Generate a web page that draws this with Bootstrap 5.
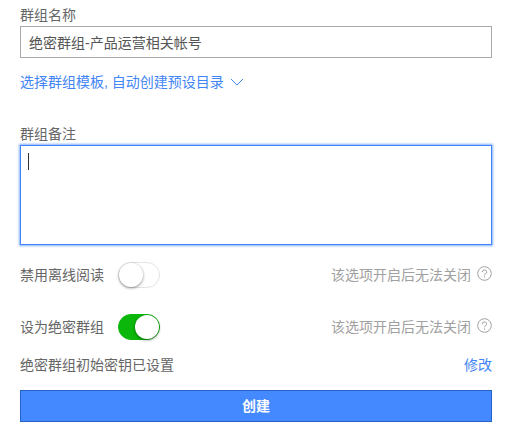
<!DOCTYPE html>
<html lang="zh-CN">
<head>
    <meta charset="UTF-8">
    <meta name="viewport" content="width=device-width, initial-scale=1.0">
    <title>创建群组</title>
    <link href="https://cdn.jsdelivr.net/npm/bootstrap@5.3.0/dist/css/bootstrap.min.css" rel="stylesheet">
    <style>
        body {
            font-family: "Liberation Sans", "Noto Sans CJK SC", sans-serif;
            font-size: 14px;
            color: #666;
            background: #fff;
        }
        .group-form {
            padding: 5px 32px 0 20px;
        }
        .field-label {
            display: block;
            height: 20px;
            line-height: 20px;
            margin-bottom: 1px;
            color: #666;
        }
        .note-label {
            margin-top: 32px;
        }
        .name-input.form-control {
            height: 32px;
            padding: 0 8px;
            font-size: 14px;
            line-height: 30px;
            color: #555;
            border: 1px solid #aaa;
            border-radius: 0;
        }
        .template-link {
            display: flex;
            align-items: center;
            gap: 6px;
            height: 20px;
            margin-top: 14px;
            color: #4285f4;
            text-decoration: none;
        }
        .note-wrap {
            position: relative;
        }
        .note-input.form-control {
            height: 100px;
            border: 1px solid #3f84f8;
            border-radius: 0;
            box-shadow: 0 0 2px 1px rgba(66, 133, 255, .65);
            resize: none;
        }
        .fake-caret {
            position: absolute;
            left: 8px;
            top: 8px;
            width: 1px;
            height: 17px;
            background: #333;
        }
        .row-first {
            margin-top: 17px;
        }
        .row-second {
            margin-top: 26px;
        }
        .row-key {
            margin-top: 15px;
            line-height: 20px;
        }
        .toggle-label {
            width: 98px;
        }
        .toggle {
            position: relative;
            display: block;
            width: 42px;
            height: 26px;
            border-radius: 13px;
            border: 1px solid #e4e4e4;
            background: #fff;
        }
        .toggle::after {
            content: "";
            position: absolute;
            left: 0;
            top: 0;
            width: 24px;
            height: 24px;
            border-radius: 50%;
            background: #fff;
            box-shadow: 0 1px 3px rgba(0, 0, 0, .45);
        }
        .toggle-on {
            background: #0ab70a;
            border-color: #0ab70a;
        }
        .toggle-on::after {
            left: 16px;
        }
        .hint {
            color: #a0a0a0;
        }
        .help-dot {
            display: block;
            margin-left: 6px;
            margin-top: -4px;
        }
        .edit-link {
            color: #4285f4;
            text-decoration: none;
        }
        .create-btn.btn {
            height: 32px;
            margin-top: 15px;
            padding: 0;
            font-size: 14px;
            font-weight: 700;
            color: #fff;
            background: #4489ff;
            border: 1px solid #2462c8;
            border-radius: 0;
        }
    </style>
</head>
<body>
    <form class="group-form">
        <label class="field-label">群组名称</label>
        <input type="text" class="form-control name-input" value="绝密群组-产品运营相关帐号">

        <a href="#" class="template-link">
            <span>选择群组模板, 自动创建预设目录</span>
            <svg width="14" height="8" viewBox="0 0 14 8" fill="none" stroke="#4285f4" stroke-width="1"><path d="M1 1l6 6 6-6"/></svg>
        </a>

        <label class="field-label note-label">群组备注</label>
        <div class="note-wrap">
            <textarea class="form-control note-input"></textarea>
            <span class="fake-caret"></span>
        </div>

        <div class="d-flex align-items-center justify-content-between row-first">
            <div class="d-flex align-items-center">
                <span class="toggle-label">禁用离线阅读</span>
                <span class="toggle"></span>
            </div>
            <div class="d-flex align-items-center hint">
                <span>该选项开启后无法关闭</span>
                <svg class="help-dot" width="15" height="15" viewBox="0 0 15 15" fill="none" stroke="#a0a0a0"><circle cx="7.5" cy="7.5" r="6.8"/><path d="M5.4 6a2.1 2.1 0 1 1 3.1 1.8c-.7.4-1 .8-1 1.6"/><path d="M7.5 10.4v1.2"/></svg>
            </div>
        </div>

        <div class="d-flex align-items-center justify-content-between row-second">
            <div class="d-flex align-items-center">
                <span class="toggle-label">设为绝密群组</span>
                <span class="toggle toggle-on"></span>
            </div>
            <div class="d-flex align-items-center hint">
                <span>该选项开启后无法关闭</span>
                <svg class="help-dot" width="15" height="15" viewBox="0 0 15 15" fill="none" stroke="#a0a0a0"><circle cx="7.5" cy="7.5" r="6.8"/><path d="M5.4 6a2.1 2.1 0 1 1 3.1 1.8c-.7.4-1 .8-1 1.6"/><path d="M7.5 10.4v1.2"/></svg>
            </div>
        </div>

        <div class="d-flex justify-content-between row-key">
            <span>绝密群组初始密钥已设置</span>
            <a href="#" class="edit-link">修改</a>
        </div>

        <button type="button" class="btn w-100 create-btn">创建</button>
    </form>
</body>
</html>
